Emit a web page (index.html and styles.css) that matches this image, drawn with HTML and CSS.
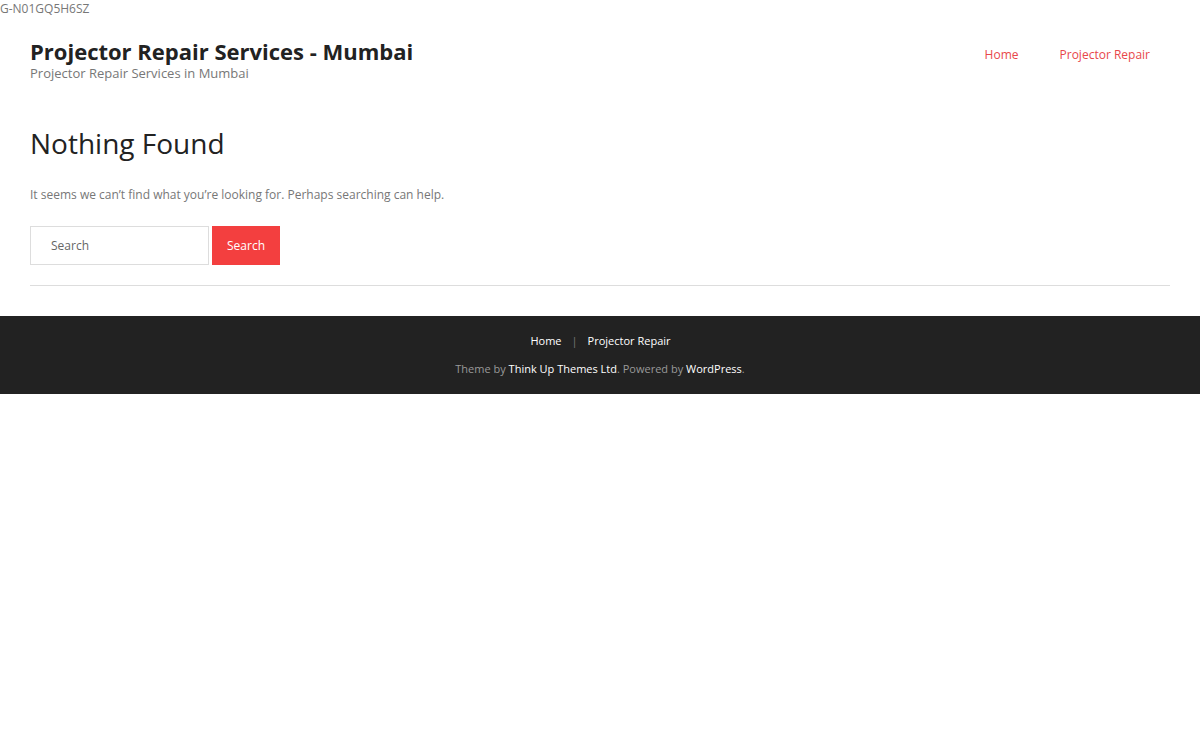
FILE: index.html
```html
<!DOCTYPE html>
<html>
<head>
<meta charset="utf-8">
<link rel="stylesheet" href="styles.css">
</head>
<body>
<div class="gtag">G-N01GQ5H6SZ</div>
<header class="site-header">
  <div class="branding">
    <h1 class="site-title">Projector Repair Services - Mumbai</h1>
    <div class="site-desc">Projector Repair Services in Mumbai</div>
  </div>
  <nav class="main-nav">
    <a href="#">Home</a>
    <a href="#">Projector Repair</a>
  </nav>
</header>
<main class="content">
  <h2 class="page-title">Nothing Found</h2>
  <p class="notice">It seems we can’t find what you’re looking for. Perhaps searching can help.</p>
  <form class="search-form">
    <input class="search-field" type="text" placeholder="Search">
    <button class="search-btn" type="button">Search</button>
  </form>
  <hr class="divider">
</main>
<footer class="site-footer">
  <div class="footer-nav">
    <a href="#">Home</a><span class="sep">|</span><a href="#">Projector Repair</a>
  </div>
  <div class="copyright">Theme by <a href="#">Think Up Themes Ltd</a>. Powered by <a href="#">WordPress</a>.</div>
</footer>
</body>
</html>
```
FILE: styles.css
```css
html, body {
  margin: 0;
  padding: 0;
  background: #fff;
  font-family: "Open Sans", "Liberation Sans", sans-serif;
}
.gtag {
  font-size: 12px;
  line-height: 18px;
  color: #777;
}
.site-header {
  display: flex;
  justify-content: space-between;
  align-items: flex-start;
  padding: 19px 30px 0 30px;
}
.site-title {
  margin: 0;
  font-size: 22px;
  line-height: 28px;
  font-weight: 700;
  color: #222;
}
.site-desc {
  font-size: 13px;
  line-height: 17px;
  color: #777;
}
.main-nav {
  display: flex;
  gap: 41px;
  padding: 9px 20px 0 0;
}
.main-nav a {
  font-size: 12px;
  line-height: 18px;
  color: #e8474a;
  text-decoration: none;
}
.content {
  margin: 0 30px;
  padding-top: 43px;
}
.page-title {
  margin: 0;
  font-size: 28px;
  line-height: 36px;
  font-weight: 400;
  color: #222;
}
.notice {
  margin: 24px 0 0 0;
  font-size: 12px;
  line-height: 20px;
  color: #777;
}
.search-form {
  display: flex;
  gap: 3px;
  margin-top: 21px;
}
.search-field {
  box-sizing: border-box;
  width: 179px;
  height: 39px;
  border: 1px solid #ddd;
  padding: 0 20px;
  font-family: inherit;
  font-size: 12px;
  color: #555;
  outline: none;
}
.search-field::placeholder {
  color: #666;
}
.search-btn {
  width: 68px;
  height: 39px;
  border: none;
  background: #f33f3f;
  color: #fff;
  font-family: inherit;
  font-size: 12px;
  padding: 0;
}
.divider {
  margin: 20px 0 0 0;
  border: none;
  border-top: 1px solid #ddd;
  height: 0;
}
.site-footer {
  margin-top: 30px;
  background: #222;
  padding: 16px 0 16px;
  text-align: center;
  font-size: 11px;
}
.footer-nav {
  line-height: 18px;
  padding-left: 1px;
}
.footer-nav a {
  color: #fff;
  text-decoration: none;
}
.footer-nav .sep {
  color: #777;
  margin: 0 10px 0 10px;
}
.copyright {
  margin-top: 10px;
  line-height: 18px;
  color: #999;
}
.copyright a {
  color: #fff;
  text-decoration: none;
}
```
